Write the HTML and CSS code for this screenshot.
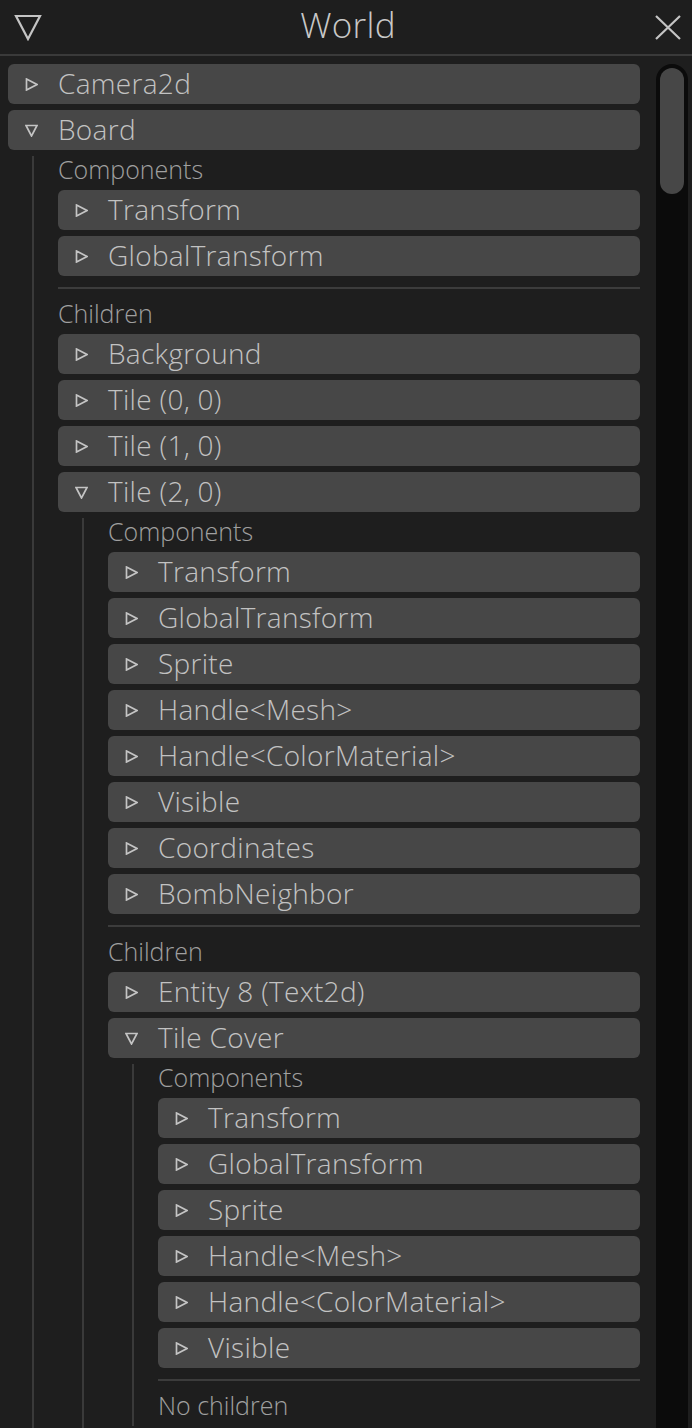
FILE: index.html
```html
<!DOCTYPE html>
<html>
<head>
<meta charset="utf-8">
<link rel="stylesheet" href="styles.css">
</head>
<body>
<div class="window">
  <header class="titlebar">
    <svg class="t-icon" width="28" height="27" viewBox="0 0 28 27"><polygon points="2,2 26,2 14,25" fill="none" stroke="#c4c4c4" stroke-width="2.2" stroke-linejoin="miter"/></svg>
    <h1 class="title">World</h1>
    <svg class="t-icon" width="28" height="27" viewBox="0 0 28 27"><path d="M2 2 L26 25 M26 2 L2 25" stroke="#c4c4c4" stroke-width="2.2" fill="none"/></svg>
  </header>
  <div class="body">
    <div class="tree">
      <div class="row"><svg class="ico" viewBox="0 0 13 13"><polygon points="1.5,1 12,6.5 1.5,12"/></svg><span>Camera2d</span></div>
      <div class="row"><svg class="ico" viewBox="0 0 13 13"><polygon points="1,1.5 12,1.5 6.5,12"/></svg><span>Board</span></div>
      <div class="kids">
        <div class="label">Components</div>
        <div class="row"><svg class="ico" viewBox="0 0 13 13"><polygon points="1.5,1 12,6.5 1.5,12"/></svg><span>Transform</span></div>
        <div class="row"><svg class="ico" viewBox="0 0 13 13"><polygon points="1.5,1 12,6.5 1.5,12"/></svg><span>GlobalTransform</span></div>
        <div class="sep"></div>
        <div class="label">Children</div>
        <div class="row"><svg class="ico" viewBox="0 0 13 13"><polygon points="1.5,1 12,6.5 1.5,12"/></svg><span>Background</span></div>
        <div class="row"><svg class="ico" viewBox="0 0 13 13"><polygon points="1.5,1 12,6.5 1.5,12"/></svg><span>Tile (0, 0)</span></div>
        <div class="row"><svg class="ico" viewBox="0 0 13 13"><polygon points="1.5,1 12,6.5 1.5,12"/></svg><span>Tile (1, 0)</span></div>
        <div class="row"><svg class="ico" viewBox="0 0 13 13"><polygon points="1,1.5 12,1.5 6.5,12"/></svg><span>Tile (2, 0)</span></div>
        <div class="kids">
          <div class="label">Components</div>
          <div class="row"><svg class="ico" viewBox="0 0 13 13"><polygon points="1.5,1 12,6.5 1.5,12"/></svg><span>Transform</span></div>
          <div class="row"><svg class="ico" viewBox="0 0 13 13"><polygon points="1.5,1 12,6.5 1.5,12"/></svg><span>GlobalTransform</span></div>
          <div class="row"><svg class="ico" viewBox="0 0 13 13"><polygon points="1.5,1 12,6.5 1.5,12"/></svg><span>Sprite</span></div>
          <div class="row"><svg class="ico" viewBox="0 0 13 13"><polygon points="1.5,1 12,6.5 1.5,12"/></svg><span>Handle&lt;Mesh&gt;</span></div>
          <div class="row"><svg class="ico" viewBox="0 0 13 13"><polygon points="1.5,1 12,6.5 1.5,12"/></svg><span>Handle&lt;ColorMaterial&gt;</span></div>
          <div class="row"><svg class="ico" viewBox="0 0 13 13"><polygon points="1.5,1 12,6.5 1.5,12"/></svg><span>Visible</span></div>
          <div class="row"><svg class="ico" viewBox="0 0 13 13"><polygon points="1.5,1 12,6.5 1.5,12"/></svg><span>Coordinates</span></div>
          <div class="row"><svg class="ico" viewBox="0 0 13 13"><polygon points="1.5,1 12,6.5 1.5,12"/></svg><span>BombNeighbor</span></div>
          <div class="sep"></div>
          <div class="label">Children</div>
          <div class="row"><svg class="ico" viewBox="0 0 13 13"><polygon points="1.5,1 12,6.5 1.5,12"/></svg><span>Entity 8 (Text2d)</span></div>
          <div class="row"><svg class="ico" viewBox="0 0 13 13"><polygon points="1,1.5 12,1.5 6.5,12"/></svg><span>Tile Cover</span></div>
          <div class="kids">
            <div class="label">Components</div>
            <div class="row"><svg class="ico" viewBox="0 0 13 13"><polygon points="1.5,1 12,6.5 1.5,12"/></svg><span>Transform</span></div>
            <div class="row"><svg class="ico" viewBox="0 0 13 13"><polygon points="1.5,1 12,6.5 1.5,12"/></svg><span>GlobalTransform</span></div>
            <div class="row"><svg class="ico" viewBox="0 0 13 13"><polygon points="1.5,1 12,6.5 1.5,12"/></svg><span>Sprite</span></div>
            <div class="row"><svg class="ico" viewBox="0 0 13 13"><polygon points="1.5,1 12,6.5 1.5,12"/></svg><span>Handle&lt;Mesh&gt;</span></div>
            <div class="row"><svg class="ico" viewBox="0 0 13 13"><polygon points="1.5,1 12,6.5 1.5,12"/></svg><span>Handle&lt;ColorMaterial&gt;</span></div>
            <div class="row"><svg class="ico" viewBox="0 0 13 13"><polygon points="1.5,1 12,6.5 1.5,12"/></svg><span>Visible</span></div>
            <div class="sep"></div>
            <div class="label">No children</div>
          </div>
        </div>
      </div>
    </div>
    <div class="scrollbar"><div class="thumb"></div></div>
  </div>
</div>
</body>
</html>
```
FILE: styles.css
```css
html, body {
  margin: 0;
  padding: 0;
  background: #1e1e1e;
}
body {
  width: 692px;
  height: 1428px;
  overflow: hidden;
  font-family: "Open Sans", "Noto Sans", sans-serif;
  font-weight: 300;
}
.window {
  display: flex;
  flex-direction: column;
  height: 1428px;
}
.titlebar {
  height: 54px;
  border-bottom: 2px solid #3a3a3a;
  display: flex;
  align-items: center;
  justify-content: space-between;
  padding: 0 10px 0 14px;
  box-sizing: content-box;
}
.t-icon {
  display: block;
}
.title {
  margin: 0 0 4px 0;
  font-weight: 300;
  font-size: 35px;
  line-height: 40px;
  color: #c8c8c8;
  letter-spacing: 0.3px;
}
.body {
  flex: 1;
  display: flex;
  padding: 8px 4px 0 8px;
  gap: 16px;
  min-height: 0;
}
.tree {
  width: 632px;
  display: flex;
  flex-direction: column;
  gap: 6px;
}
.row {
  height: 40px;
  flex: none;
  background: #474747;
  border-radius: 6px;
  display: flex;
  align-items: center;
  padding-left: 17px;
  gap: 20px;
  color: #c2c2c2;
  font-size: 28px;
  letter-spacing: 0.3px;
  white-space: nowrap;
}
.row span {
  line-height: 40px;
  margin-top: -2px;
}
.ico {
  width: 13px;
  height: 13px;
  flex: none;
  fill: none;
  stroke: #c4c4c4;
  stroke-width: 1.7;
  stroke-linejoin: miter;
}
.kids {
  margin-left: 24px;
  border-left: 2px solid #3a3a3a;
  padding-left: 24px;
  padding-bottom: 6px;
  display: flex;
  flex-direction: column;
  gap: 6px;
}
.label {
  height: 28px;
  line-height: 26px;
  font-size: 25px;
  color: #a0a0a0;
  white-space: nowrap;
}
.sep {
  height: 12px;
  flex: none;
  display: flex;
  align-items: center;
}
.sep::before {
  content: "";
  display: block;
  width: 100%;
  height: 2px;
  background: #3c3c3c;
}
.scrollbar {
  width: 32px;
  flex: none;
  background: #0b0b0b;
  border-radius: 16px 16px 0 0;
  padding: 4px 4px 0 4px;
  box-sizing: border-box;
}
.thumb {
  height: 126px;
  background: #474747;
  border-radius: 12px;
}
```
